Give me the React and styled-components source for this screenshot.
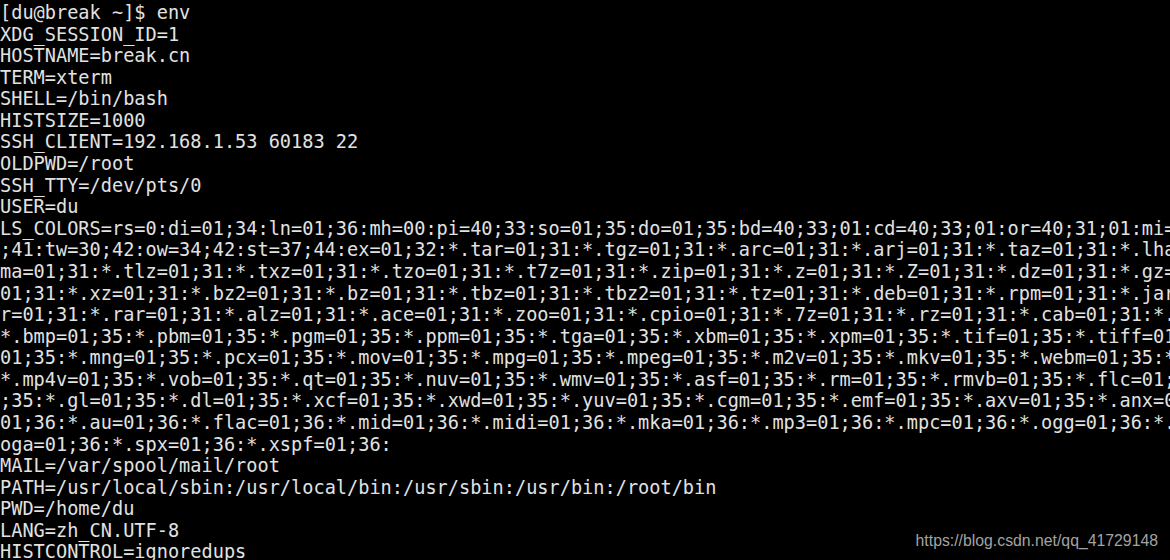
import styled, { createGlobalStyle } from 'styled-components';

const GlobalStyle = createGlobalStyle`
  html, body {
    margin: 0;
    padding: 0;
    background: #000;
  }
`;

const COLS = 140;

const LS_COLORS =
  'rs=0:di=01;34:ln=01;36:mh=00:pi=40;33:so=01;35:do=01;35:bd=40;33;01:cd=40;33;01:or=40;31;01:mi=01;05;37;41:su=37;41:sg=30;43:ca=30;41:tw=30;42:ow=34;42:st=37;44:ex=01;32:' +
  '*.tar=01;31:*.tgz=01;31:*.arc=01;31:*.arj=01;31:*.taz=01;31:*.lha=01;31:*.lz4=01;31:*.lzh=01;31:*.lzma=01;31:*.tlz=01;31:*.txz=01;31:*.tzo=01;31:*.t7z=01;31:*.zip=01;31:*.z=01;31:*.Z=01;31:*.dz=01;31:*.gz=01;31:*.lrz=01;31:*.lz=01;31:*.lzo=01;31:*.xz=01;31:*.bz2=01;31:*.bz=01;31:*.tbz=01;31:*.tbz2=01;31:*.tz=01;31:*.deb=01;31:*.rpm=01;31:*.jar=01;31:*.war=01;31:*.ear=01;31:*.sar=01;31:*.rar=01;31:*.alz=01;31:*.ace=01;31:*.zoo=01;31:*.cpio=01;31:*.7z=01;31:*.rz=01;31:*.cab=01;31:' +
  '*.jpg=01;35:*.jpeg=01;35:*.gif=01;35:*.bmp=01;35:*.pbm=01;35:*.pgm=01;35:*.ppm=01;35:*.tga=01;35:*.xbm=01;35:*.xpm=01;35:*.tif=01;35:*.tiff=01;35:*.png=01;35:*.svg=01;35:*.svgz=01;35:*.mng=01;35:*.pcx=01;35:*.mov=01;35:*.mpg=01;35:*.mpeg=01;35:*.m2v=01;35:*.mkv=01;35:*.webm=01;35:*.ogm=01;35:*.mp4=01;35:*.m4v=01;35:*.mp4v=01;35:*.vob=01;35:*.qt=01;35:*.nuv=01;35:*.wmv=01;35:*.asf=01;35:*.rm=01;35:*.rmvb=01;35:*.flc=01;35:*.avi=01;35:*.fli=01;35:*.flv=01;35:*.gl=01;35:*.dl=01;35:*.xcf=01;35:*.xwd=01;35:*.yuv=01;35:*.cgm=01;35:*.emf=01;35:*.axv=01;35:*.anx=01;35:*.ogv=01;35:*.ogx=01;35:' +
  '*.aac=01;36:*.au=01;36:*.flac=01;36:*.mid=01;36:*.midi=01;36:*.mka=01;36:*.mp3=01;36:*.mpc=01;36:*.ogg=01;36:*.ra=01;36:*.wav=01;36:*.axa=01;36:*.oga=01;36:*.spx=01;36:*.xspf=01;36:';

// the terminal wraps long values at its column width
const wrap = (text) => {
  const out = [];
  for (let i = 0; i < text.length; i += COLS) out.push(text.slice(i, i + COLS));
  return out;
};

const lines = [
  '[du@break ~]$ env',
  'XDG_SESSION_ID=1',
  'HOSTNAME=break.cn',
  'TERM=xterm',
  'SHELL=/bin/bash',
  'HISTSIZE=1000',
  'SSH_CLIENT=192.168.1.53 60183 22',
  'OLDPWD=/root',
  'SSH_TTY=/dev/pts/0',
  'USER=du',
  ...wrap('LS_COLORS=' + LS_COLORS),
  'MAIL=/var/spool/mail/root',
  'PATH=/usr/local/sbin:/usr/local/bin:/usr/sbin:/usr/bin:/root/bin',
  'PWD=/home/du',
  'LANG=zh_CN.UTF-8',
  'HISTCONTROL=ignoredups',
];

const Screen = styled.div`
  position: relative;
  width: 1170px;
  height: 560px;
  overflow: hidden;
  background: #000;
`;

const Output = styled.div`
  display: flex;
  flex-direction: column;
  padding: 2px 0 0 0;
`;

const Line = styled.div`
  font-family: 'DejaVu Sans Mono', monospace;
  font-size: 18.6px;
  line-height: 21.58px;
  height: 21.58px;
  color: #e2e2e2;
  white-space: pre;
`;

const Watermark = styled.div`
  position: absolute;
  right: 12px;
  bottom: 10px;
  font-family: 'Liberation Sans', Arial, sans-serif;
  font-size: 15.8px;
  color: #a3a3a3;
`;

const App = () => (
  <Screen>
    <GlobalStyle />
    <Output>
      {lines.map((l, i) => (
        <Line key={i}>{l}</Line>
      ))}
    </Output>
    <Watermark>https://blog.csdn.net/qq_41729148</Watermark>
  </Screen>
);

export default App;
